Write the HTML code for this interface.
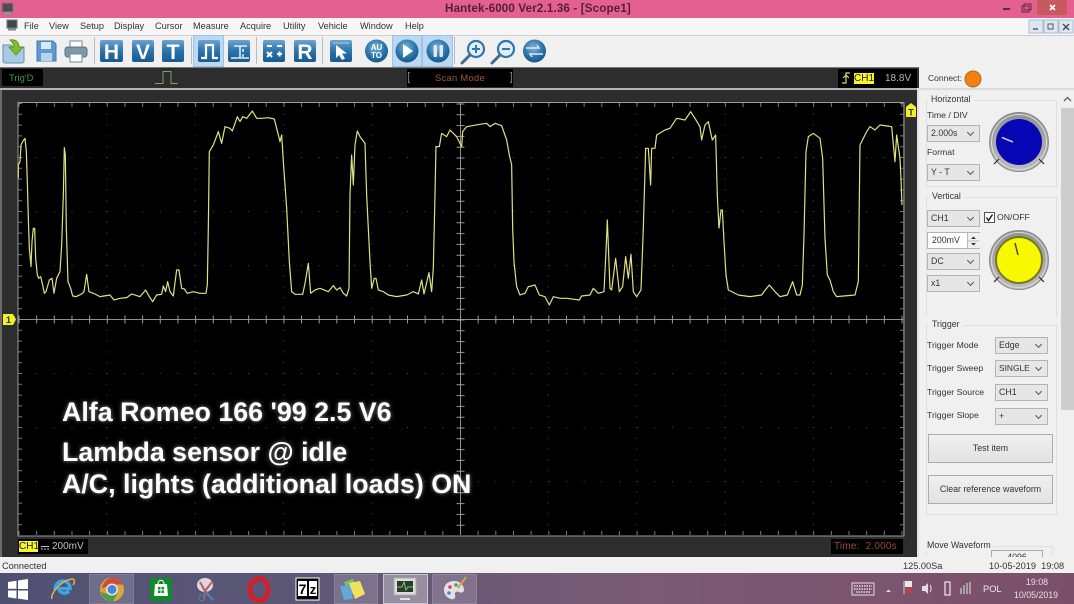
<!DOCTYPE html>
<html><head><meta charset="utf-8"><title>Hantek-6000</title>
<style>
html,body{margin:0;padding:0;background:#f0f0f0}
#p{position:relative;width:1074px;height:604px;overflow:hidden;font-family:"Liberation Sans",sans-serif;font-size:9.3px;color:#222;background:#f0f0f0;filter:blur(.35px)}
.a{position:absolute;white-space:nowrap}
.m{position:absolute;top:21px;font-size:9.2px;color:#333;line-height:11px}
.l{position:absolute;font-size:8.7px;color:#333;line-height:11px;white-space:nowrap}
.c{position:absolute;width:53px;height:17px;box-sizing:border-box;background:#e6e6e6;border:1px solid #b4b4b4;font-size:8.8px;line-height:15px;padding-left:3px;color:#333}
.c:after{content:"";position:absolute;right:6px;top:4px;width:4px;height:4px;border-right:1.5px solid #555;border-bottom:1.5px solid #555;transform:rotate(45deg)}
.b{position:absolute;box-sizing:border-box;background:linear-gradient(#f0f0f0,#e2e2e2);border:1px solid #adadad;text-align:center;font-size:8.8px;color:#333}
.g{position:absolute;border:1px solid #dfdfdf;box-sizing:border-box}
.gt{position:absolute;background:#f0f0f0;padding:0 3px;font-size:8.8px;line-height:11px;color:#333}
.hl{position:absolute;background:#bcd8f2;border:1px solid #9cc3e6;box-sizing:border-box}
.tb{position:absolute;top:574px;height:30px;background:rgba(255,255,255,.16);box-sizing:border-box;border:1px solid rgba(255,255,255,.12)}
.sep{position:absolute;top:37px;width:1px;height:27px;background:#b5bcc4}
.cap{position:absolute;white-space:nowrap;left:62px;font-size:26.8px;font-weight:bold;line-height:30px;color:#fff;text-shadow:0 0 4px rgba(255,255,255,.5)}
</style></head><body><div id="p">

<!-- title bar -->
<div class="a" style="left:0;top:0;width:1074px;height:18px;background:#e3608f"></div>
<div class="a" style="left:0;top:0;width:1074px;text-align:center;font-size:11.6px;font-weight:bold;line-height:17px;color:#561c3c;text-indent:2px;letter-spacing:.15px">Hantek-6000 Ver2.1.36 - [Scope1]</div>
<!-- menu bar -->
<div class="a" style="left:0;top:18px;width:1074px;height:17px;background:#f6f6f7;border-bottom:1px solid #cfcfcf"></div>
<svg class="a" style="left:0;top:0" width="1074" height="36">
 <rect x="2" y="3" width="11" height="9" fill="#554a50" stroke="#8a7a80"/><rect x="4" y="12" width="7" height="3" fill="#9a8f93"/>
 <rect x="7" y="20" width="10" height="8" fill="#3d4a48" stroke="#777"/><rect x="8" y="28" width="8" height="2.5" fill="#888"/>
 <rect x="1003" y="8" width="7" height="2" fill="#5f2a45"/>
 <rect x="1022" y="6" width="7" height="6" fill="none" stroke="#5f2a45"/><rect x="1024" y="4" width="7" height="6" fill="none" stroke="#5f2a45"/>
 <rect x="1037" y="0" width="30" height="15" fill="#c75a5f"/>
 <path d="M1050 5l5 5M1055 5l-5 5" stroke="#fff" stroke-width="1.6"/>
</svg>
<span class="m" style="left:24px">File</span><span class="m" style="left:49px">View</span><span class="m" style="left:80px">Setup</span><span class="m" style="left:114px">Display</span><span class="m" style="left:155px">Cursor</span><span class="m" style="left:193px">Measure</span><span class="m" style="left:240px">Acquire</span><span class="m" style="left:283px">Utility</span><span class="m" style="left:318px">Vehicle</span><span class="m" style="left:360px">Window</span><span class="m" style="left:405px">Help</span>
<svg class="a" style="left:1028px;top:19px" width="46" height="16">
 <rect x="1" y="1" width="14" height="13" fill="#dbe7f3" stroke="#a9bdd2"/><rect x="16" y="1" width="14" height="13" fill="#dbe7f3" stroke="#a9bdd2"/><rect x="31" y="1" width="14" height="13" fill="#dbe7f3" stroke="#a9bdd2"/>
 <path d="M5 10h5" stroke="#444" stroke-width="1.3"/><rect x="20" y="5" width="5" height="5" fill="none" stroke="#555"/><path d="M35 5l6 6M41 5l-6 6" stroke="#444" stroke-width="1.3"/>
</svg>

<!-- toolbar -->
<div class="a" style="left:0;top:36px;width:920px;height:31px;background:#f0f0f0"></div>
<div class="a" style="left:920px;top:36px;width:154px;height:31px;background:#f0f0f0"></div>
<div class="hl" style="left:193px;top:35px;width:31px;height:32px"></div>
<div class="hl" style="left:392px;top:35px;width:30px;height:32px"></div>
<div class="hl" style="left:422px;top:35px;width:31px;height:32px"></div>
<div class="sep" style="left:94px"></div><div class="sep" style="left:191px"></div><div class="sep" style="left:256px"></div><div class="sep" style="left:322px"></div><div class="sep" style="left:454px"></div>
<svg class="a" style="left:0;top:35px" width="560" height="32">
 <defs>
  <linearGradient id="bl" x1="0" y1="0" x2="0" y2="1"><stop offset="0" stop-color="#6da4cf"/><stop offset=".5" stop-color="#2b73a9"/><stop offset="1" stop-color="#175a8f"/></linearGradient>
  <radialGradient id="rb" cx=".45" cy=".35" r=".7"><stop offset="0" stop-color="#7fb3d9"/><stop offset=".6" stop-color="#2a74aa"/><stop offset="1" stop-color="#14517f"/></radialGradient>
 </defs>
 <!-- folder -->
 <path d="M3 10h8l2 2h11v14a2 2 0 0 1-2 2H5a2 2 0 0 1-2-2z" fill="#a9c9e2" stroke="#5f8fb5"/>
 <path d="M10 5c6-1 9 2 9 7h4l-7 8-7-8h5c0-3-2-5-4-7z" fill="#7fbe2e" stroke="#4f8a18" stroke-width=".8"/>
 <!-- save -->
 <path d="M37 6h16l3 3v17H37z" fill="#5c9ad0" stroke="#3f79ad"/><rect x="41" y="7" width="10" height="7" fill="#dbe9f5"/><rect x="41" y="18" width="11" height="8" fill="#b8d3ea"/>
 <!-- print -->
 <rect x="70" y="6" width="12" height="7" fill="#fff" stroke="#708898"/><rect x="65" y="12" width="22" height="10" rx="2.5" fill="#7e97ab" stroke="#5c7588"/><rect x="70" y="19" width="12" height="8" fill="#fff" stroke="#708898"/>
 <!-- blue squares -->
 <g fill="url(#bl)">
  <rect x="100" y="5" width="23" height="22" rx="2"/><rect x="132" y="5" width="22" height="22" rx="2"/><rect x="162" y="5" width="22" height="22" rx="2"/>
  <rect x="198" y="5" width="22" height="22" rx="2"/><rect x="228" y="5" width="22" height="22" rx="2"/><rect x="263" y="5" width="22" height="22" rx="2"/><rect x="294" y="5" width="22" height="22" rx="2"/><rect x="330" y="5" width="22" height="22" rx="2"/>
 </g>
 <g font-family="Liberation Sans" font-weight="bold" font-size="21" fill="#fff" text-anchor="middle">
  <text x="111.5" y="24">H</text><text x="143" y="24">V</text><text x="173" y="24">T</text><text x="305" y="24">R</text>
 </g>
 <path d="M201 23h5V10h7v13h5" fill="none" stroke="#fff" stroke-width="2.2"/>
 <path d="M231 23h18M234 11h6v12M240 11h7M243 14v3M243 19v3" fill="none" stroke="#dfeaf3" stroke-width="1.6"/>
 <path d="M267 11h5M277 11h5M267 17l5 5M272 17l-5 5M277 19h5M279.5 16.5v5" stroke="#fff" stroke-width="2" fill="none"/>
 <path d="M336 10v13l3-3 3 5 3-1.5-3-5h5z" fill="#fff"/><path d="M333 8h16" stroke="#a8c8e0"/>
 <!-- round -->
 <circle cx="376.5" cy="16" r="11.5" fill="url(#rb)"/><circle cx="407" cy="16" r="11.5" fill="url(#rb)"/><circle cx="438" cy="16" r="11.5" fill="url(#rb)"/><circle cx="534.5" cy="16" r="11.5" fill="url(#rb)"/>
 <text x="376.5" y="15" font-family="Liberation Sans" font-weight="bold" font-size="8" fill="#fff" text-anchor="middle">AU</text>
 <text x="376.5" y="23" font-family="Liberation Sans" font-weight="bold" font-size="8" fill="#fff" text-anchor="middle">TO</text>
 <path d="M403 9l10 7-10 7z" fill="#fff"/>
 <rect x="433.5" y="10" width="3.5" height="12" rx="1" fill="#dfeaf3"/><rect x="439.5" y="10" width="3.5" height="12" rx="1" fill="#dfeaf3"/>
 <path d="M526 13h13l-2-3M543 19h-13l2 3" fill="none" stroke="#dfeaf3" stroke-width="1.5"/>
 <!-- zoom -->
 <g fill="#e2edf6" stroke="#2f77ad" stroke-width="2.2"><circle cx="476" cy="14" r="8"/><circle cx="506" cy="14" r="8"/></g>
 <path d="M470 20l-8 8M500 20l-8 8" stroke="#3d6d94" stroke-width="3" stroke-linecap="round"/>
 <path d="M472 14h8M476 10v8M502 14h8" stroke="#2f77ad" stroke-width="2"/>
</svg>

<!-- scope frame -->
<div class="a" style="left:0;top:67px;width:919px;height:490px;background:#2d2d2d"></div>
<div class="a" style="left:0;top:67px;width:919px;height:1px;background:#777"></div>
<div class="a" style="left:0;top:88px;width:919px;height:2px;background:#b4b4b4"></div>
<div class="a" style="left:0;top:90px;width:2px;height:467px;background:#6a6a6a"></div>
<div class="a" style="left:917px;top:88px;width:2px;height:469px;background:#e2e2e2"></div>
<div class="a" style="left:2px;top:69px;width:41px;height:17px;background:#000;color:#3f9a3f;font-size:9.4px;line-height:17px;text-indent:7px">Trig'D</div>
<svg class="a" style="left:150px;top:68px" width="32" height="18"><path d="M5 15.5h8V3.500h8v12h7" fill="none" stroke="#7fa06a" stroke-width="1"/></svg>
<div class="a" style="left:407px;top:69px;width:106px;height:18px;background:#000;color:#a2573c;font-size:9.4px;line-height:18px;text-align:center;letter-spacing:.3px">Scan Mode</div>
<div class="a" style="left:408px;top:72px;width:2px;height:11px;border:1px solid #4d8a7a;border-right:0;box-sizing:border-box"></div>
<div class="a" style="left:510px;top:72px;width:2px;height:11px;border:1px solid #4d8a7a;border-left:0;box-sizing:border-box"></div>
<div class="a" style="left:838px;top:69px;width:79px;height:19px;background:#000"></div>
<svg class="a" style="left:840px;top:70px" width="14" height="16"><path d="M2 13h4V3h4M3 8l3-3 3 3" fill="none" stroke="#d8d66a" stroke-width="1.2"/></svg>
<div class="a" style="left:854px;top:73px;width:20px;height:11px;background:#f6f62a;color:#222;font-size:10px;line-height:11px;text-align:center">CH1</div>
<div class="a" style="left:885px;top:73px;color:#b5b5b5;font-size:10px;line-height:12px">18.8V</div>

<!-- plot -->
<svg class="a" style="left:0;top:90px" width="919" height="467" viewBox="0 90 919 467">
 <rect x="18" y="103" width="885" height="433" fill="#000"/>
 <path d="M18 102.500H904V536H18z" fill="none" stroke="#9a9a9a"/>
 <!-- dotted grid -->
 <g stroke="#4a4a4a" stroke-width="1" stroke-dasharray="1 9.8">
  <path d="M106.800 103V535M195.100 103V535M283.400 103V535M371.700 103V535M548.500 103V535M636.800 103V535M725.100 103V535M813.400 103V535"/>
 </g>
 <g stroke="#4a4a4a" stroke-width="1" stroke-dasharray="1 16.66">
  <path d="M18.500 157.500H903M18.500 211.500H903M18.500 265.500H903M18.500 373.500H903M18.500 427.500H903M18.500 481.500H903"/>
 </g>
 <!-- border ticks -->
 <g stroke="#7a7a7a">
  <path d="M18.500 105H903" stroke-width="4" stroke-dasharray="1 16.66"/>
  <path d="M18.500 533H903" stroke-width="4" stroke-dasharray="1 16.66"/>
  <path d="M20 103V535" stroke-width="4" stroke-dasharray="1 9.8"/>
  <path d="M902 103V535" stroke-width="4" stroke-dasharray="1 9.8"/>
 </g>
 <!-- crosshair -->
 <path d="M18 319.500H903M460.500 103V535" stroke="#8f8f8f" stroke-width="1"/>
 <path d="M18.500 319.500H903" stroke="#999" stroke-width="8" stroke-dasharray="1 16.66"/>
 <path d="M460.500 103.500V535" stroke="#999" stroke-width="8" stroke-dasharray="1 9.8"/>
 <!-- waveform -->
 <g fill="none" stroke="#e0e084" stroke-width="3.6" stroke-linejoin="round">
  <polyline transform="translate(0 95) scale(.3333)" points="55,250 55,210 60,200 63,150 68,140 75,130 79,170 82,260 85,370 88,460 93,515 96,440 100,400 104,400 107,490 112,540 116,550 122,545 128,570 133,595 138,590 148,555 156,550 162,595 170,550 180,530 185,450 190,300 193,158 196,180 199,400 204,560 212,580 218,603 228,605 245,597 252,590 260,538 267,590 285,597 300,605 330,600 342,615 360,610 380,608 395,597 420,605 437,585 445,600 458,620 470,600 485,598 490,573 497,590 503,560 510,590 520,603 530,525 537,525 545,580 553,582 562,595 580,590 600,595 618,595 622,570 625,400 628,170 640,150 655,110 665,145 675,95 690,100 697,108 712,65 720,80"/>
  <polyline transform="translate(240 95) scale(.3333)" points="0,80 8,65 20,70 37,48 50,70 65,70 85,68 103,72 110,100 120,140 125,120 130,200 140,340 148,500 155,590 165,598 188,598 195,565 205,505 212,595 225,585 240,580 265,590 280,572 290,585 300,578 310,595 320,603 327,580 330,300 335,180 340,270 345,150 352,108 360,125 375,145 380,300 390,500 395,580 403,550 408,550 415,585 430,590 445,600 470,605 500,600 520,590 535,597 545,555 552,597 567,533 575,590 580,520 585,300 588,155 598,155 605,115 620,125 630,105 650,125 665,155 668,110 680,95 720,88"/>
  <polyline transform="translate(480 95) scale(.3333)" points="0,88 20,85 30,95 45,85 65,92 80,135 88,180 95,210 98,400 102,500 110,575 120,600 135,595 145,575 165,570 178,600 195,605 208,630 220,605 240,610 260,610 298,615 305,603 330,600 340,580 355,595 372,590 378,470 382,375 390,580 395,585 407,490 418,590 428,575 437,485 445,550 453,478 460,590 470,605 483,585 490,400 497,160 505,160 512,270 515,160 525,160 530,120 555,105 570,100 590,70 615,75 632,50 645,70 660,95 665,135 675,90 685,80 697,135 707,120 712,300 717,400"/>
  <polyline transform="translate(700 95) scale(.3333)" points="57,400 63,345 67,345 72,440 78,540 85,585 95,590 115,600 150,605 185,600 192,590 208,570 225,590 240,605 262,600 278,560 290,600 300,600 307,570 312,420 318,170 325,125 340,115 360,130 368,190 375,430 382,540 390,555 400,590 410,605 465,600 475,560 480,150 500,110 510,95 525,105 540,90 575,95 585,200 590,120 600,190 603,250 606,330"/>
 </g>
 <!-- markers -->
 <path d="M906 107l5-4 5 4v10h-10z" fill="#f0f02a"/><text x="911" y="115.500" font-family="Liberation Sans" font-weight="bold" font-size="9" text-anchor="middle" fill="#333">T</text>
 <path d="M3 314h10l3 5.500-3 5.500H3z" fill="#f0f02a"/><text x="8.500" y="323" font-family="Liberation Sans" font-weight="bold" font-size="9" text-anchor="middle" fill="#333">1</text>
</svg>

<!-- caption -->
<div class="cap" style="top:397px">Alfa Romeo 166 '99 2.5 V6</div>
<div class="cap" style="top:437px">Lambda sensor @ idle</div>
<div class="cap" style="top:469px">A/C, lights (additional loads) ON</div>

<!-- bottom labels -->
<div class="a" style="left:18px;top:539px;width:70px;height:15px;background:#000"></div>
<div class="a" style="left:19px;top:541px;width:19px;height:11px;background:#f6f62a;color:#222;font-size:10px;line-height:11px;text-align:center">CH1</div>
<svg class="a" style="left:40px;top:541px" width="10" height="11"><path d="M1 5.500h8" stroke="#c4c4c4"/><path d="M1 8h8" stroke="#c4c4c4" stroke-dasharray="2 1"/></svg>
<div class="a" style="left:52px;top:541px;color:#c4c4c4;font-size:10px;line-height:11px">200mV</div>
<div class="a" style="left:831px;top:539px;width:72px;height:15px;background:#000;color:#9c4a38;font-size:10px;line-height:15px;text-indent:3px;letter-spacing:.2px">Time:&nbsp; 2.000s</div>

<!-- right panel -->
<div class="a" style="left:919px;top:67px;width:155px;height:490px;background:#f0f0f0"></div>
<div class="a" style="left:919px;top:88px;width:155px;height:2px;background:#dcdcdc"></div>
<div class="l" style="left:928px;top:73px;font-size:8.5px">Connect:</div>
<svg class="a" style="left:963px;top:69px" width="20" height="20"><circle cx="10" cy="10" r="8" fill="#f57f0f" stroke="#a86a30"/></svg>

<div class="a" style="left:1061px;top:90px;width:13px;height:467px;background:#f0f0f0"></div>
<div class="a" style="left:1061px;top:108px;width:13px;height:302px;background:#cdcdcd"></div>
<svg class="a" style="left:1061px;top:93px" width="13" height="12"><path d="M3 8l3.500-3.500L10 8" fill="none" stroke="#666" stroke-width="1.500"/></svg>

<div class="g" style="left:926px;top:100px;width:131px;height:87px"></div>
<div class="gt" style="left:928px;top:94px">Horizontal</div>
<div class="l" style="left:927px;top:110px">Time / DIV</div>
<div class="c" style="left:927px;top:125px">2.000s</div>
<div class="l" style="left:927px;top:147px">Format</div>
<div class="c" style="left:927px;top:164px">Y - T</div>

<div class="g" style="left:926px;top:197px;width:131px;height:120px;border-bottom:0"></div>
<div class="gt" style="left:929px;top:191px">Vertical</div>
<div class="c" style="left:927px;top:210px">CH1</div>
<svg class="a" style="left:984px;top:212px" width="11" height="11"><rect x=".5" y=".5" width="10" height="10" fill="#fff" stroke="#555"/><path d="M2.500 5.500l2 3 4-6" fill="none" stroke="#222" stroke-width="1.500"/></svg>
<div class="l" style="left:997px;top:212px">ON/OFF</div>
<div class="c" style="left:927px;top:232px;background:#fff;padding-left:4px">200mV</div>
<div class="a" style="left:967px;top:233px;width:12px;height:15px;background:#f0f0f0;border-left:1px solid #bbb"></div>
<svg class="a" style="left:968px;top:234px" width="11" height="14"><path d="M3 5l2.500-2.500L8 5zM3 9l2.500 2.500L8 9z" fill="#333"/><path d="M0 7h11" stroke="#bbb"/></svg>
<div class="c" style="left:927px;top:253px">DC</div>
<div class="c" style="left:927px;top:275px">x1</div>

<svg class="a" style="left:985px;top:108px" width="70" height="190" viewBox="985 108 70 190">
 <defs><linearGradient id="kn" x1="0" y1="0" x2="0" y2="1"><stop offset="0" stop-color="#929292"/><stop offset="1" stop-color="#bcbcbc"/></linearGradient></defs>
 <g>
  <circle cx="1019" cy="142" r="29.500" fill="url(#kn)" stroke="#8d8d8d"/><circle cx="1019" cy="142" r="27.500" fill="none" stroke="#dcdcdc"/>
  <circle cx="1019" cy="142" r="23" fill="#0606b4"/>
  <path d="M999 159l-5 5M1039 159l5 5" stroke="#222" stroke-width="1.200"/>
  <path d="M1002 137.500l11 4.500" stroke="#c8c8ee" stroke-width="1.500"/>
 </g>
 <g>
  <circle cx="1019" cy="260" r="29.500" fill="url(#kn)" stroke="#8d8d8d"/><circle cx="1019" cy="260" r="27.500" fill="none" stroke="#dcdcdc"/>
  <circle cx="1019" cy="260" r="23" fill="#f8f800" stroke="#77772a" stroke-width="2"/>
  <path d="M999 277l-5 5M1039 277l5 5" stroke="#222" stroke-width="1.200"/>
  <path d="M1015 243l3 12" stroke="#444" stroke-width="1.500"/>
 </g>
</svg>

<div class="g" style="left:926px;top:325px;width:131px;height:190px"></div>
<div class="gt" style="left:929px;top:319px">Trigger</div>
<div class="l" style="left:927px;top:340px">Trigger Mode</div><div class="c" style="left:995px;top:337px">Edge</div>
<div class="l" style="left:927px;top:363px">Trigger Sweep</div><div class="c" style="left:995px;top:360px;font-size:8.4px">SINGLE</div>
<div class="l" style="left:927px;top:387px">Trigger Source</div><div class="c" style="left:995px;top:384px">CH1</div>
<div class="l" style="left:927px;top:410px">Trigger Slope</div><div class="c" style="left:995px;top:408px">+</div>
<div class="b" style="left:928px;top:434px;width:125px;height:29px;line-height:27px">Test item</div>
<div class="b" style="left:928px;top:475px;width:125px;height:29px;line-height:27px">Clear reference waveform</div>

<div class="g" style="left:926px;top:546px;width:127px;height:14px"></div>
<div class="gt" style="left:924px;top:540px">Move Waveform</div>
<div class="a" style="left:991px;top:550px;width:52px;height:12px;background:#f0f0f0;border:1px solid #aaa;box-sizing:border-box;text-align:center;font-size:8.8px;line-height:13px;color:#333">4096</div>

<!-- status bar -->
<div class="a" style="left:0;top:557px;width:1074px;height:16px;background:#f0f0f0"></div>
<div class="a" style="left:2px;top:561px;font-size:9.2px;line-height:11px;color:#333">Connected</div>
<div class="a" style="left:903px;top:561px;font-size:9.2px;line-height:11px;color:#333">125.00Sa</div>
<div class="a" style="left:989px;top:561px;font-size:9.2px;line-height:11px;color:#333">10-05-2019&nbsp; 19:08</div>

<!-- taskbar -->
<div class="a" style="left:0;top:573px;width:1074px;height:31px;background:linear-gradient(90deg,#4e5072 0%,#5f5877 30%,#7a5a74 60%,#7c4f68 100%)"></div>
<div class="tb" style="left:89px;width:45px"></div>
<div class="tb" style="left:334px;width:44px"></div>
<div class="tb" style="left:383px;width:45px;background:rgba(255,255,255,.32);border-color:rgba(255,255,255,.5)"></div>
<div class="tb" style="left:432px;width:45px"></div>
<svg class="a" style="left:0;top:573px" width="1074" height="31">
 <path d="M8 9l8.500-1.200v8H8zM18 7.500L28 6v10h-10zM8 17.500h8.500v8L8 24.300zM18 17.500h10V27l-10-1.400z" fill="#fff"/>
 <!-- IE -->
 <path d="M55 17c0-6 4-9 8-9s7 3 7 7.500H59c0 5 7 6 10 2.500" fill="none" stroke="#37a7e6" stroke-width="3.400"/>
 <path d="M52 26c-2-5 8-18 20-20 3 0 3 3 1 6" fill="none" stroke="#e7b040" stroke-width="1.500"/>
 <!-- chrome -->
 <circle cx="112" cy="16.500" r="12" fill="#d9a63a"/><path d="M112 4.500a12 12 0 0 1 11 7h-11l-10 4a12 12 0 0 1 10-11z" fill="#cf4b3f"/><path d="M101 19a12 12 0 0 0 12 9.500l5-9-6 3z" fill="#4f9a4e"/><circle cx="112" cy="16.500" r="6" fill="#e8e8e8"/><circle cx="112" cy="16.500" r="4.500" fill="#4a85d0"/>
 <!-- store -->
 <rect x="150" y="5" width="22" height="23" fill="#0d8a2a"/><path d="M155 11h12l1 12h-14z" fill="#fff"/><path d="M158 11c0-5 6-5 6 0" fill="none" stroke="#fff"/><rect x="158" y="14" width="2.500" height="2.500" fill="#0d8a2a"/><rect x="161.500" y="14" width="2.500" height="2.500" fill="#0d8a2a"/><rect x="158" y="17.500" width="2.500" height="2.500" fill="#0d8a2a"/><rect x="161.500" y="17.500" width="2.500" height="2.500" fill="#0d8a2a"/>
 <!-- snip -->
 <ellipse cx="205" cy="12" rx="8" ry="7" fill="#e0d6dc"/><path d="M200 9l5 9 8 9M212 9l-7 9-1 8" fill="none" stroke="#c25a5a" stroke-width="2"/><path d="M205 18l8 9" stroke="#4e7fb5" stroke-width="2.500"/><circle cx="202" cy="25" r="3" fill="none" stroke="#4e7fb5"/>
 <!-- opera -->
 <ellipse cx="259" cy="16.500" rx="9" ry="11" fill="none" stroke="#d0202c" stroke-width="5"/>
 <!-- 7z -->
 <rect x="296" y="5" width="23" height="22" fill="#000" stroke="#fff"/><rect x="298" y="8" width="9" height="15" fill="#fff"/><rect x="309" y="8" width="8" height="15" fill="#fff"/>
 <text x="302.500" y="21" font-family="Liberation Sans" font-weight="bold" font-size="14" text-anchor="middle" fill="#000">7</text><text x="313" y="21" font-family="Liberation Sans" font-weight="bold" font-size="13" text-anchor="middle" fill="#000">z</text>
 <!-- stickies -->
 <path d="M344 9l9-3 5 13-8 3z" fill="#7fc060"/><path d="M340 13l10-1 3 14-9 1z" fill="#60a8d8"/><path d="M349 10l11-2 5 13-10 5z" fill="#f2e060"/>
 <!-- scope -->
 <rect x="394" y="5" width="22" height="17" fill="#ddd" stroke="#aaa"/><rect x="397" y="8" width="16" height="11" fill="#2a3a2a"/><path d="M397 14h5l2-5 2 8 2-3h5" fill="none" stroke="#6fd06f"/><path d="M400 26h10" stroke="#e0e0e0" stroke-width="2"/>
 <!-- paint -->
 <path d="M444 17c0-6 5-9 10-9 6 0 10 4 10 9 0 3-4 3-5 2-2-1-5 0-4 3 1 3-1 5-4 4-4-1-7-5-7-9z" fill="#e4e0e6"/><circle cx="450" cy="14" r="1.800" fill="#d04545"/><circle cx="449" cy="20" r="1.800" fill="#4a85d0"/><circle cx="456" cy="12" r="1.800" fill="#55a055"/><path d="M458 15l8-11" stroke="#d9a040" stroke-width="2"/>
 <!-- tray -->
 <rect x="852" y="10" width="22" height="12" fill="none" stroke="#e4dde2"/><path d="M854 13h18M854 16h18M856 19h14" stroke="#e4dde2" stroke-dasharray="1.500 1" stroke-width="1.500"/>
 <path d="M886 19l2.500-2.500 2.500 2.500z" fill="#e4dde2"/>
 <path d="M904 8v13" stroke="#ccc"/><path d="M905 8h7v6h-7z" fill="#e8e8e8"/><path d="M907 15l5 5M912 15l-5 5" stroke="#d83a3a" stroke-width="1.800"/>
 <path d="M922 13h3l3-3v11l-3-3h-3z" fill="#e4dde2"/><path d="M930 12c1.500 2 1.500 5 0 7" fill="none" stroke="#e4dde2"/>
 <rect x="945" y="9" width="5" height="13" fill="none" stroke="#e4dde2" stroke-width="1.300"/>
 <path d="M961 21V15M964 21V12M967 21V10M970 21V9" stroke="#a8a0a8" stroke-width="2"/>
</svg>
<div class="a" style="left:983px;top:583px;color:#efe8ec;font-size:9.3px;line-height:12px">POL</div>
<div class="a" style="left:1026px;top:577px;color:#e8dfe4;font-size:8.8px;line-height:11px">19:08</div>
<div class="a" style="left:1014px;top:590px;color:#e8dfe4;font-size:8.8px;line-height:11px">10/05/2019</div>

</div></body></html>
